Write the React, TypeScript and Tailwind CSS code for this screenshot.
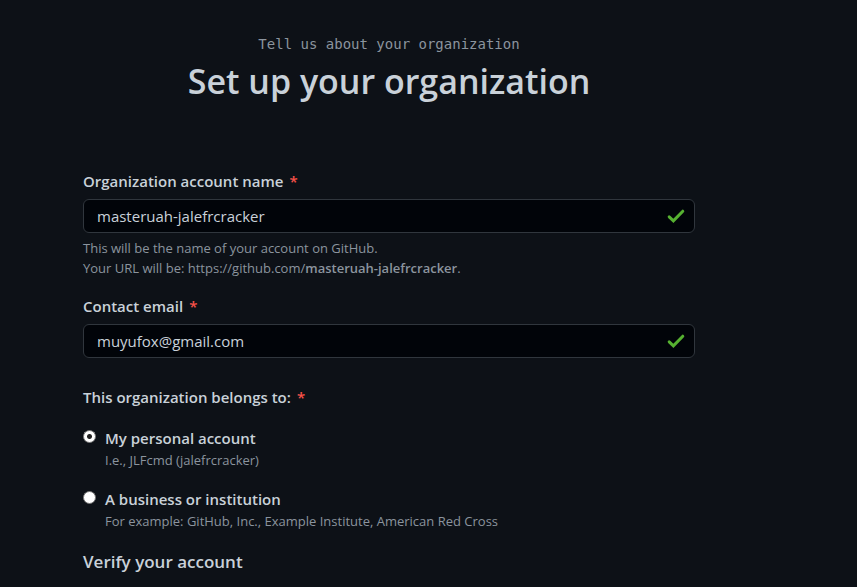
import { useState } from "react";
import type { ReactNode } from "react";

function Required() {
  return <span className="ml-[6px] text-[#f85149]">*</span>;
}

function CheckMark() {
  return (
    <svg
      className="pointer-events-none absolute top-1/2 right-[10px] h-[14px] w-[18px] -translate-y-1/2"
      viewBox="0 0 18 14"
      fill="none"
      stroke="#56b131"
      strokeWidth="3"
      strokeLinecap="round"
      aria-hidden="true"
    >
      <path d="M2.2 7.8 6.4 11.8 15.8 2.2" />
    </svg>
  );
}

type FieldProps = {
  id: string;
  label: string;
  type: string;
  value: string;
  onChange: (value: string) => void;
  children?: ReactNode;
};

function Field({ id, label, type, value, onChange, children }: FieldProps) {
  return (
    <div>
      <label htmlFor={id} className="block text-[15px] leading-6 font-semibold">
        {label}
        <Required />
      </label>
      <div className="relative mt-[6px]">
        <input
          id={id}
          type={type}
          value={value}
          onChange={(e) => onChange(e.target.value)}
          className="block h-[34px] w-full rounded-md border border-[#30363d] bg-[#010409] pr-9 pl-[13px] text-[15px] text-[#c9d1d9] outline-none focus:border-[#58a6ff]"
        />
        <CheckMark />
      </div>
      {children}
    </div>
  );
}

type OptionProps = {
  id: string;
  title: string;
  note: string;
  checked: boolean;
  onSelect: () => void;
};

function Option({ id, title, note, checked, onSelect }: OptionProps) {
  return (
    <div className="flex items-start gap-[9px]">
      <input
        id={id}
        type="radio"
        name="owner"
        checked={checked}
        onChange={onSelect}
        className="mt-1 size-[13px] shrink-0 appearance-none rounded-full border border-[#767676] bg-white checked:bg-[radial-gradient(circle,#222_0_2px,#fff_3px)]"
      />
      <label htmlFor={id} className="block">
        <span className="block text-[15px] leading-6 font-semibold">{title}</span>
        <span className="block text-[13px] leading-5 text-[#8b949e]">{note}</span>
      </label>
    </div>
  );
}

export default function App() {
  const [name, setName] = useState("masteruah-jalefrcracker");
  const [email, setEmail] = useState("muyufox@gmail.com");
  const [owner, setOwner] = useState("personal");

  return (
    <main className="min-h-screen bg-[#0d1117] pt-8 pr-[162px] pl-[83px] font-['Segoe_UI','Open_Sans',sans-serif] text-[#c9d1d9]">
      <header className="text-center">
        <p className="font-['DejaVu_Sans_Mono',monospace] text-[14px] leading-6 text-[#8b949e]">
          Tell us about your organization
        </p>
        <h1 className="text-[34px] leading-[50px] font-semibold whitespace-nowrap">Set up your organization</h1>
      </header>

      <form className="mt-[63px]" onSubmit={(e) => e.preventDefault()}>
        <Field id="org-name" label="Organization account name" type="text" value={name} onChange={setName}>
          <p className="mt-[5px] text-[13px] leading-5 text-[#8b949e]">
            This will be the name of your account on GitHub.
            <br />
            Your URL will be: https://github.com/<span className="font-semibold">{name}</span>.
          </p>
        </Field>

        <div className="mt-4">
          <Field id="email" label="Contact email" type="email" value={email} onChange={setEmail} />
        </div>

        <fieldset className="mt-[27px]">
          <legend className="text-[15px] leading-6 font-semibold">
            This organization belongs to:
            <Required />
          </legend>
          <div className="mt-[17px] flex flex-col gap-[17px]">
            <Option
              id="owner-personal"
              title="My personal account"
              note="I.e., JLFcmd (jalefrcracker)"
              checked={owner === "personal"}
              onSelect={() => setOwner("personal")}
            />
            <Option
              id="owner-business"
              title="A business or institution"
              note="For example: GitHub, Inc., Example Institute, American Red Cross"
              checked={owner === "business"}
              onSelect={() => setOwner("business")}
            />
          </div>
        </fieldset>

        <h2 className="mt-[15px] text-[17px] leading-8 font-semibold">Verify your account</h2>
      </form>
    </main>
  );
}
